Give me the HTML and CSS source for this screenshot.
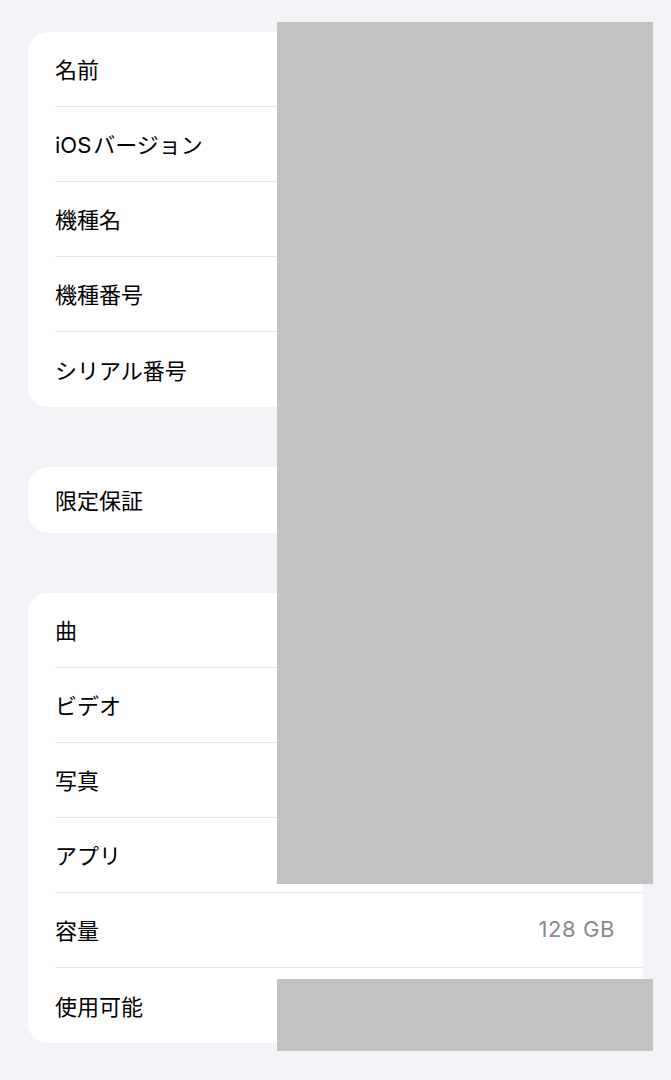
FILE: index.html
```html
<!DOCTYPE html>
<html lang="ja">
<head>
    <meta charset="UTF-8">
    <meta name="viewport" content="width=device-width, initial-scale=1.0">
    <title>情報</title>
    <link rel="stylesheet" href="styles.css">
</head>
<body>

<div class="page">
    <div class="group">
        <div class="row"><span class="label">名前</span></div>
        <div class="row"><span class="label">iOS<span class="thin">&#8202;</span>バージョン</span></div>
        <div class="row"><span class="label">機種名</span></div>
        <div class="row"><span class="label">機種番号</span></div>
        <div class="row"><span class="label">シリアル番号</span></div>
    </div>

    <div class="group">
        <div class="row row-single"><span class="label">限定保証</span></div>
    </div>

    <div class="group">
        <div class="row"><span class="label">曲</span></div>
        <div class="row"><span class="label">ビデオ</span></div>
        <div class="row"><span class="label">写真</span></div>
        <div class="row"><span class="label">アプリ</span></div>
        <div class="row"><span class="label">容量</span><span class="value">128 GB</span></div>
        <div class="row"><span class="label">使用可能</span></div>
    </div>

    <!-- geschwärzte Bereiche -->
    <div class="redact redact-top"></div>
    <div class="redact redact-bottom"></div>
</div>

</body>
</html>
```

FILE: styles.css
```css
body {
    margin: 0;
    padding: 0;
    background-color: #f2f2f7;
    font-family: Inter, "Noto Sans CJK JP", sans-serif;
    color: #000;
}
.page {
    position: relative;
    height: 1080px;
    padding: 32px 28px 0;
    box-sizing: border-box;
    display: flex;
    flex-direction: column;
    gap: 60px;
}
.group {
    background-color: #fff;
    border-radius: 20px;
    overflow: hidden;
}
.row {
    height: 75px;
    margin-left: 27px;
    padding-right: 28px;
    padding-bottom: 2px;
    display: flex;
    align-items: center;
    justify-content: space-between;
    border-bottom: 1px solid #e3e3e8;
    box-sizing: border-box;
}
.row:last-child {
    border-bottom: none;
}
.row-single {
    height: 66px;
}
.label {
    font-size: 22px;
}
.value {
    font-size: 22px;
    letter-spacing: 0.6px;
    color: #8a8a8e;
}
.redact {
    position: absolute;
    left: 277px;
    width: 376px;
    background-color: #c2c2c2;
}
.redact-top {
    top: 22px;
    height: 862px;
}
.redact-bottom {
    top: 979px;
    height: 72px;
}
```
